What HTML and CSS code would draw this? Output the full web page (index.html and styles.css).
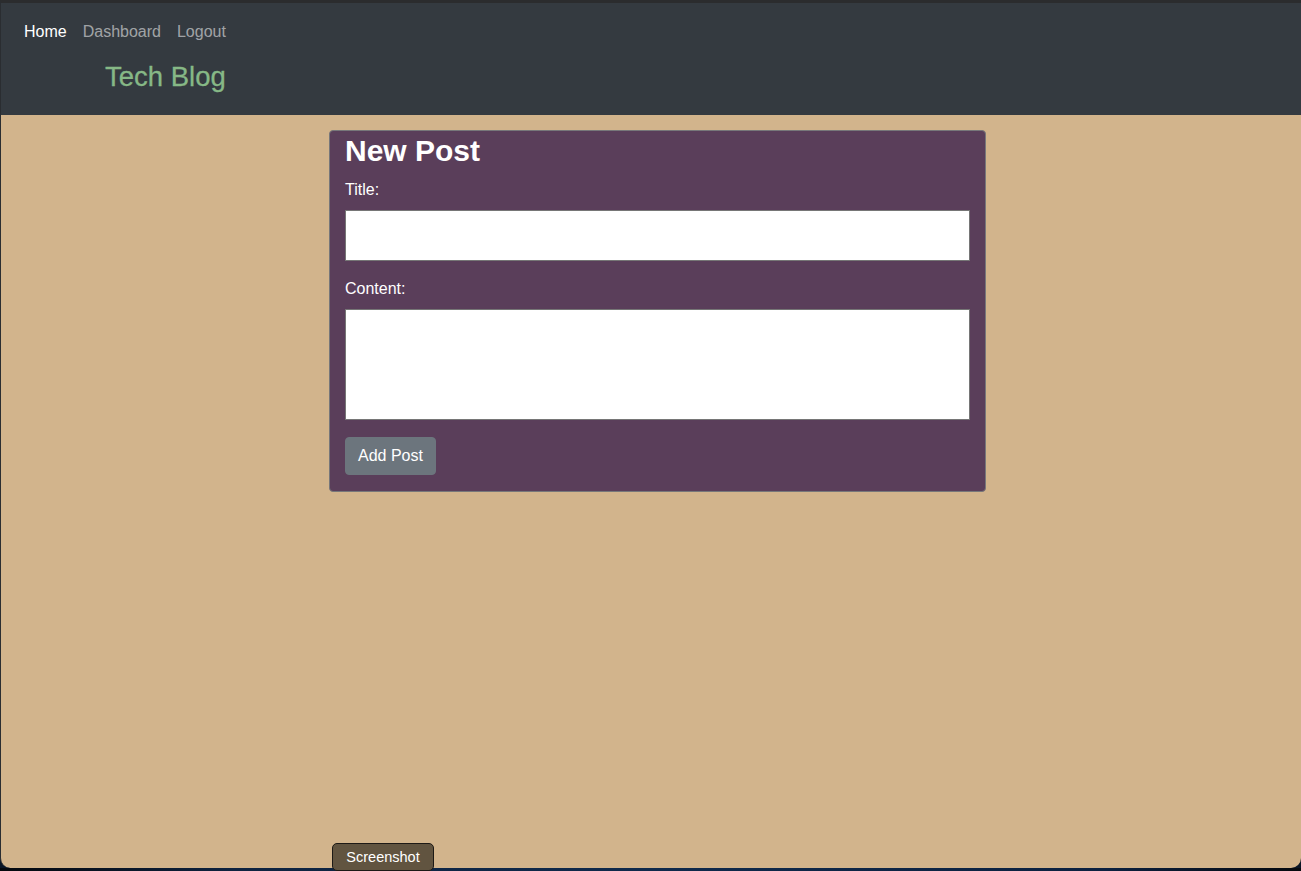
FILE: index.html
```html
<!DOCTYPE html>
<html lang="en">
<head>
<meta charset="utf-8">
<title>Tech Blog</title>
<link rel="stylesheet" href="styles.css">
</head>
<body>
<div class="window">
  <header class="navbar">
    <nav class="nav">
      <a class="nav-link active" href="#">Home</a>
      <a class="nav-link" href="#">Dashboard</a>
      <a class="nav-link" href="#">Logout</a>
    </nav>
    <h1 class="brand">Tech Blog</h1>
  </header>
  <main class="main">
    <form class="card">
      <h2 class="card-title">New Post</h2>
      <label class="label" for="title">Title:</label>
      <input class="field" id="title" type="text">
      <label class="label" for="content">Content:</label>
      <textarea class="field area" id="content"></textarea>
      <button class="btn" type="button">Add Post</button>
    </form>
  </main>
</div>
<div class="desktop"></div>
<div class="tooltip">Screenshot</div>
</body>
</html>
```
FILE: styles.css
```css
* { box-sizing: border-box; }
html, body { margin: 0; padding: 0; }
body {
  background: #0b1626;
  font-family: "Liberation Sans", Arial, sans-serif;
  height: 871px;
  overflow: hidden;
  position: relative;
}
.window {
  height: 868px;
  background: #d2b48c;
  border-top: 3px solid #2b2c2e;
  border-left: 1px solid #2a2d31;
  border-radius: 0 0 10px 10px;
  overflow: hidden;
  display: flex;
  flex-direction: column;
}
.navbar {
  background: #343a40;
  height: 112px;
  padding: 9px 15px 0;
}
.nav {
  display: flex;
}
.nav-link {
  display: block;
  padding: 8px 8px;
  line-height: 24px;
  font-size: 16px;
  color: rgba(255,255,255,0.55);
  text-decoration: none;
}
.nav-link.active { color: #fff; }
.brand {
  margin: 8px 0 0 89px;
  font-size: 27.5px;
  line-height: 33px;
  font-weight: 400;
  color: #86b886;
  -webkit-text-stroke: 0.3px #86b886;
}
.main {
  padding: 15px 0 0 328px;
}
.card {
  width: 657px;
  background: #5a3e5a;
  border: 1px solid #77777a;
  border-radius: 4px;
  padding: 2px 15px 16px;
  display: flex;
  flex-direction: column;
  align-items: flex-start;
}
.card-title {
  margin: 0;
  font-size: 30px;
  line-height: 36px;
  font-weight: 700;
  color: #fff;
}
.label {
  margin-top: 9px;
  margin-bottom: 8px;
  font-size: 16px;
  line-height: 24px;
  color: #fff;
}
.field + .label { margin-top: 16px; }
.field {
  display: block;
  width: 100%;
  height: 51px;
  margin: 0;
  background: #fff;
  border: 1px solid #767676;
  border-radius: 0;
  font-family: inherit;
  font-size: 16px;
}
.area {
  height: 111px;
  resize: none;
}
.btn {
  margin-top: 17px;
  height: 38px;
  padding: 6px 12px;
  background: #6c757d;
  border: 1px solid #6c757d;
  border-radius: 4px;
  color: #fff;
  font-family: inherit;
  font-size: 16px;
  line-height: 24px;
}
.desktop {
  height: 3px;
  background: linear-gradient(90deg, #05080d 0, #0e2340 18%, #0f2a4c 50%, #0c2140 85%, #06090e 100%);
}
.tooltip {
  position: absolute;
  left: 332px;
  top: 843px;
  width: 102px;
  height: 28px;
  background: #615440;
  border: 1px solid #1d1a16;
  border-radius: 5px;
  color: #fff;
  font-size: 14.5px;
  line-height: 26px;
  text-align: center;
}
```
